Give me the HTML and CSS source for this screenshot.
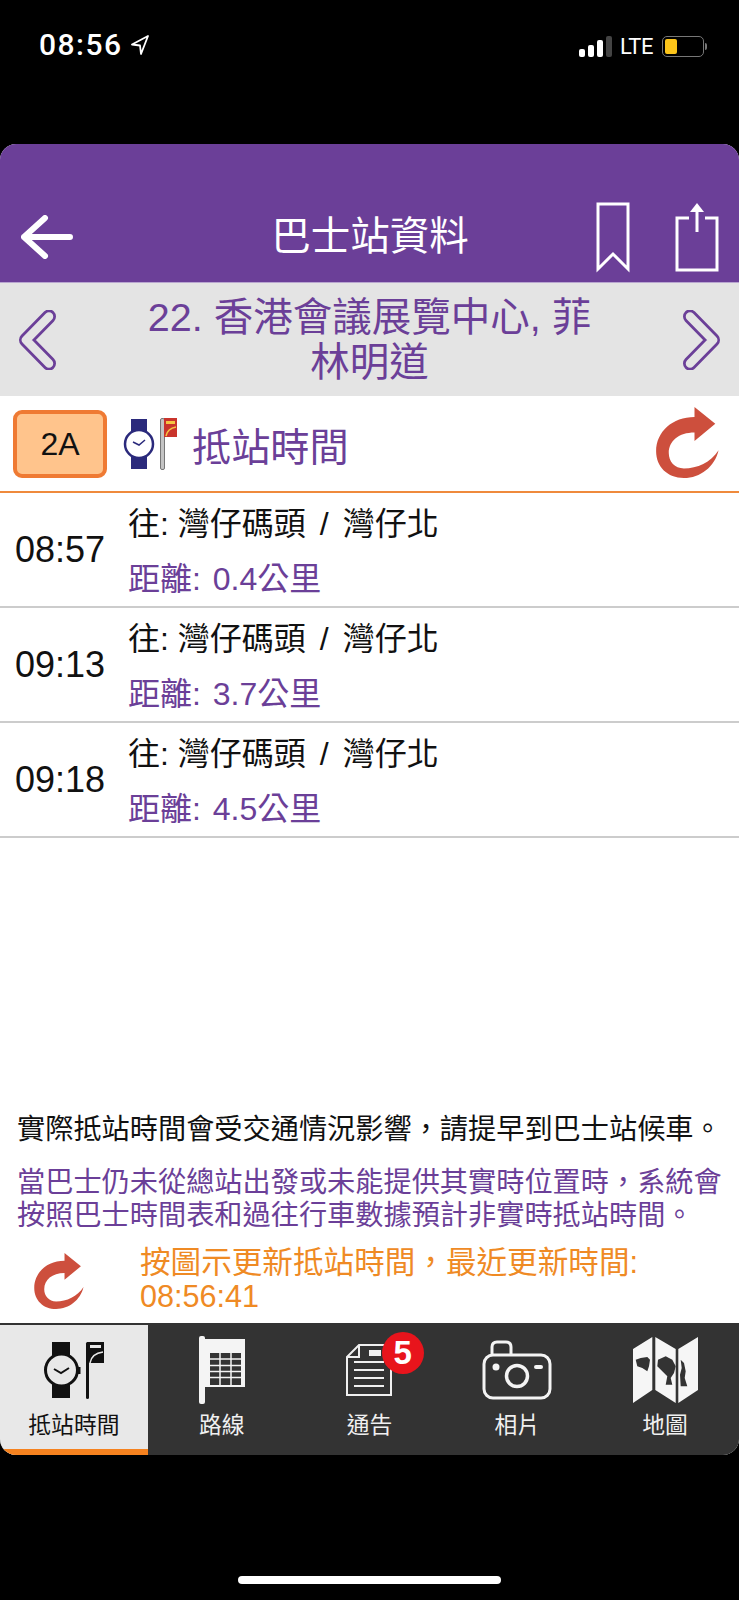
FILE: index.html
```html
<!DOCTYPE html>
<html lang="zh-Hant">
<head>
    <meta charset="UTF-8">
    <meta name="viewport" content="width=device-width, initial-scale=1.0">
    <title>巴士站資料</title>
    <link rel="stylesheet" href="styles.css">
</head>
<body>
    <svg class="defs" width="0" height="0" aria-hidden="true">
        <symbol id="refresh" viewBox="0 0 61 69">
            <path d="M37.300 0 L57.500 16.300 L37.300 33 V24.700 C22 24.700 12.300 33 12.300 44.700 C12.300 53 18 59.700 27 59.700 C40 59.700 53 54 60.700 42 C57 58 43 69 27 69 C11 69 0 58 0 43 C0 24 16 9.700 37.300 9.700 Z"/>
        </symbol>
    </svg>

    <div class="status-bar">
        <div class="status-time">
            <span>08:56</span>
            <svg width="18" height="20" viewBox="0 0 18 20"><path d="M17 1 L1 9.500 L9 10.500 L10 19 Z" fill="none" stroke="#fff" stroke-width="1.800" stroke-linejoin="round"/></svg>
        </div>
        <div class="status-right">
            <div class="signal"><i class="bar1"></i><i class="bar2"></i><i class="bar3"></i><i class="bar4"></i></div>
            <span class="lte">LTE</span>
            <div class="battery"><div class="battery-level"></div></div>
            <div class="battery-cap"></div>
        </div>
    </div>

    <div class="app">
        <div class="app-header">
            <svg class="back-icon" width="52" height="44" viewBox="0 0 52 44"><path d="M24 3 L3 22 L24 41 M3 22 H49" fill="none" stroke="#fff" stroke-width="6" stroke-linecap="round" stroke-linejoin="round"/></svg>
            <h1>巴士站資料</h1>
            <div class="header-actions">
                <svg width="34" height="72" viewBox="0 0 34 72"><path d="M2 2 H32 V67 L17 52 L2 67 Z" fill="none" stroke="#fff" stroke-width="3"/></svg>
                <svg width="44" height="70" viewBox="0 0 44 70"><path d="M14 16 H2 V68 H42 V16 H30" fill="none" stroke="#fff" stroke-width="3"/><path d="M22 30 V6" stroke="#fff" stroke-width="3"/><path d="M15 10 L22 1 L29 10 Z" fill="#fff"/></svg>
            </div>
        </div>

        <div class="stop-bar">
            <svg class="chevron" width="38" height="60" viewBox="0 0 38 60"><path class="chevron-out" d="M31 6.500 L8 30 L31 53.500"/><path class="chevron-in" d="M31 6.500 L8 30 L31 53.500"/></svg>
            <div class="stop-name">22. 香港會議展覽中心, 菲<br>林明道</div>
            <svg class="chevron" width="38" height="60" viewBox="0 0 38 60"><path class="chevron-out" d="M7 6.500 L30 30 L7 53.500"/><path class="chevron-in" d="M7 6.500 L30 30 L7 53.500"/></svg>
        </div>

        <div class="route-row">
            <div class="route-btn">2A</div>
            <svg class="eta-icon" width="56" height="52" viewBox="0 0 56 52">
                <rect x="8" y="1" width="16" height="12" fill="#2b2a7c"/>
                <rect x="8" y="39" width="16" height="12" fill="#2b2a7c"/>
                <circle cx="16" cy="26" r="14" fill="#fff" stroke="#2b2a7c" stroke-width="2.500"/>
                <path d="M10 24 L16 27 L22 22" fill="none" stroke="#2b2a7c" stroke-width="1.500"/>
                <rect x="37.500" y="0.500" width="4" height="51" rx="1.500" fill="#c4c4c4" stroke="#777" stroke-width="1"/>
                <rect x="41" y="0" width="13" height="19" fill="#c9342c"/>
                <rect x="43" y="3" width="9" height="3" fill="#f5c542"/>
                <path d="M43 18 C44 13 47 10 53 9" fill="none" stroke="#f5c542" stroke-width="1.500"/>
            </svg>
            <div class="route-title">抵站時間</div>
            <svg class="refresh-icon" width="63" height="71"><use href="#refresh"/></svg>
        </div>

        <div class="eta-list">
            <div class="eta-item">
                <div class="eta-time">08:57</div>
                <div class="eta-info">
                    <div class="eta-dest">往: 灣仔碼頭<span class="sep">/</span>灣仔北</div>
                    <div class="eta-dist">距離: 0.4公里</div>
                </div>
            </div>
            <div class="eta-item">
                <div class="eta-time">09:13</div>
                <div class="eta-info">
                    <div class="eta-dest">往: 灣仔碼頭<span class="sep">/</span>灣仔北</div>
                    <div class="eta-dist">距離: 3.7公里</div>
                </div>
            </div>
            <div class="eta-item">
                <div class="eta-time">09:18</div>
                <div class="eta-info">
                    <div class="eta-dest">往: 灣仔碼頭<span class="sep">/</span>灣仔北</div>
                    <div class="eta-dist">距離: 4.5公里</div>
                </div>
            </div>
        </div>

        <div class="notes">
            <p class="note-black">實際抵站時間會受交通情況影響，請提早到巴士站候車。</p>
            <p class="note-purple">當巴士仍未從總站出發或未能提供其實時位置時，系統會按照巴士時間表和過往行車數據預計非實時抵站時間。</p>
            <div class="update-row">
                <svg class="refresh-icon small" width="50" height="56"><use href="#refresh"/></svg>
                <div class="update-text">按圖示更新抵站時間，最近更新時間:<br>08:56:41</div>
            </div>
        </div>

        <div class="tab-bar">
            <div class="tab active">
                <div class="tab-icon">
                    <svg width="62" height="58" viewBox="0 0 62 58">
                        <rect x="9" y="1" width="18" height="15" fill="#111"/>
                        <rect x="9" y="42" width="18" height="15" fill="#111"/>
                        <circle cx="18.500" cy="29" r="16" fill="#e8e8e8" stroke="#111" stroke-width="3"/>
                        <rect x="35" y="26" width="2.500" height="7" fill="#111"/>
                        <path d="M11 28 L18 32 L26 27" fill="none" stroke="#111" stroke-width="2"/>
                        <rect x="43" y="1" width="3" height="57" rx="1.500" fill="#111"/>
                        <path d="M44 1 H61 V22 H44 Z" fill="#111"/>
                        <rect x="47" y="4" width="11" height="3" fill="#e8e8e8"/>
                        <path d="M47 22 C48 16 52 12 60 11" fill="none" stroke="#e8e8e8" stroke-width="1.500"/>
                    </svg>
                </div>
                <span>抵站時間</span>
            </div>
            <div class="tab">
                <div class="tab-icon">
                    <svg width="46" height="68" viewBox="0 0 46 68">
                        <rect x="0" y="0" width="6" height="68" rx="2" fill="#f4f4f4"/>
                        <rect x="6" y="3" width="40" height="48" fill="#f4f4f4"/>
                        <path d="M11 17 H42 V49 H11 Z" fill="#333"/>
                        <path d="M11 23 H42 M11 29.500 H42 M11 35.500 H42 M11 41.500 H42 M21 17 V49 M32 17 V49" stroke="#f4f4f4" stroke-width="1.500"/>
                    </svg>
                </div>
                <span>路線</span>
            </div>
            <div class="tab">
                <div class="tab-icon">
                    <svg width="46" height="52" viewBox="0 0 46 52">
                        <path d="M1 13 L13 1 H45 V51 H1 Z M13 1 V13 H1" fill="none" stroke="#f0f0f0" stroke-width="2"/>
                        <path d="M8 18 H38 M8 26 H38 M8 34 H38 M8 42 H38" stroke="#f0f0f0" stroke-width="2"/>
                        <rect x="23" y="6" width="12" height="6" fill="#f0f0f0"/>
                    </svg>
                </div>
                <span>通告</span>
                <div class="badge">5</div>
            </div>
            <div class="tab">
                <div class="tab-icon">
                    <svg width="70" height="60" viewBox="0 0 70 60">
                        <rect x="2" y="15" width="66" height="43" rx="9" fill="none" stroke="#f4f4f4" stroke-width="3"/>
                        <path d="M10 14 V7 Q10 2 15 2 H24 Q29 2 29 7 V14" fill="none" stroke="#f4f4f4" stroke-width="3"/>
                        <circle cx="35" cy="36" r="10.500" fill="none" stroke="#f4f4f4" stroke-width="3.500"/>
                        <circle cx="14" cy="27" r="3.500" fill="#f4f4f4"/>
                        <rect x="52" y="25" width="9" height="4" rx="2" fill="#f4f4f4"/>
                    </svg>
                </div>
                <span>相片</span>
            </div>
            <div class="tab">
                <div class="tab-icon">
                    <svg width="65" height="66" viewBox="0 0 65 66">
                        <path d="M0 12 L19.300 0 V53 L0 66 Z M22.300 0 L42.700 12 V66 L22.300 53 Z M45.300 12 L65 0 V53 L45.300 66 Z" fill="#f6f6f6"/>
                        <path d="M2.700 22.700 L7.700 21 L14.300 20 L17 22.700 L16 29.300 L14.300 34.300 L9.300 31 L4.300 29.300 Z M25 22.700 L32.700 19.300 L39.300 22.700 L42.700 29.300 L41 36 L37.700 41 L39.300 47.700 L32.700 47.700 L34.300 39.300 L29.300 34.300 L24.300 29.300 Z M47.700 22.700 L51 26 L52.700 34.300 L51.700 41 L54.300 49.300 L47.700 49.300 L47 37.700 L48.700 31 Z" fill="#333"/>
                    </svg>
                </div>
                <span>地圖</span>
            </div>
        </div>
    </div>

    <div class="home-area">
        <div class="home-indicator"></div>
    </div>
</body>
</html>
```

FILE: styles.css
```css
body {
    margin: 0;
    height: 1600px;
    display: flex;
    flex-direction: column;
    background: #000;
    font-family: "Liberation Sans", "Noto Sans CJK TC", sans-serif;
    color: #111;
    overflow: hidden;
}

.defs {
    position: absolute;
}

/* status bar */
.status-bar {
    height: 144px;
    padding: 28px 32px 0 39px;
    box-sizing: border-box;
    display: flex;
    justify-content: space-between;
    align-items: flex-start;
    color: #fff;
}

.status-time {
    display: flex;
    align-items: center;
    gap: 8px;
    font-family: Roboto, sans-serif;
    font-weight: 500;
    font-size: 30px;
    line-height: 34px;
    letter-spacing: 1.5px;
}

.status-right {
    display: flex;
    align-items: center;
    height: 34px;
    margin-top: 1px;
}

.signal {
    display: flex;
    align-items: flex-end;
    gap: 3px;
    height: 21px;
    margin-right: 8px;
}

.signal i {
    display: block;
    width: 6px;
    border-radius: 2px;
    background: #fff;
}

.signal .bar1 { height: 8px; }
.signal .bar2 { height: 12px; }
.signal .bar3 { height: 17px; }
.signal .bar4 { height: 21px; background: #444; }

.lte {
    font-family: Roboto, sans-serif;
    font-size: 22px;
    letter-spacing: -0.5px;
    margin-right: 9px;
}

.battery {
    width: 42px;
    height: 21px;
    box-sizing: border-box;
    border: 1.5px solid #777;
    border-radius: 5px;
    padding: 2px;
}

.battery-level {
    width: 12px;
    height: 100%;
    background: #fcc419;
    border-radius: 2px;
}

.battery-cap {
    width: 2px;
    height: 7px;
    margin-left: 1px;
    background: #777;
    border-radius: 0 2px 2px 0;
}

/* app card */
.app {
    height: 1311px;
    display: flex;
    flex-direction: column;
    background: #fff;
    border-radius: 16px;
    overflow: hidden;
}

.app-header {
    height: 139px;
    box-sizing: border-box;
    padding: 58px 20px 0 21px;
    border-bottom: 1px solid #b9a6d0;
    display: grid;
    grid-template-columns: 1fr auto 1fr;
    align-items: flex-start;
    background: #6b3f98;
}

.back-icon {
    margin-top: 13px;
}

.app-header h1 {
    margin: 11px 0 0;
    font-size: 39.5px;
    line-height: 46px;
    font-weight: 400;
    color: #fff;
}

.header-actions {
    display: flex;
    justify-content: flex-end;
    gap: 45px;
}

.stop-bar {
    height: 113px;
    padding: 0 18px;
    display: flex;
    align-items: center;
    justify-content: space-between;
    background: #e4e4e4;
}

.chevron path {
    fill: none;
    stroke-linecap: round;
    stroke-linejoin: round;
}

.chevron-out {
    stroke: #6b3f98;
    stroke-width: 14;
}

.chevron-in {
    stroke: #e4e4e4;
    stroke-width: 8.5;
}

.stop-name {
    font-size: 39.5px;
    line-height: 45px;
    text-align: center;
    color: #6b3f98;
}

.route-row {
    height: 95px;
    padding: 0 20px 0 13px;
    display: flex;
    align-items: center;
    border-bottom: 2px solid #ef8a3c;
}

.route-btn {
    width: 94px;
    height: 68px;
    box-sizing: border-box;
    border: 4px solid #ef7a33;
    border-radius: 9px;
    background: #ffc48c;
    font-size: 32px;
    line-height: 60px;
    text-align: center;
}

.eta-icon {
    margin-left: 16px;
}

.route-title {
    flex: 1;
    margin-left: 13px;
    font-size: 39.2px;
    color: #6b3f98;
}

.refresh-icon {
    fill: #cd4f3d;
    margin-bottom: 3px;
}

.eta-item {
    height: 113px;
    padding: 0 15px;
    border-bottom: 2px solid #ccc;
    display: flex;
    align-items: center;
}

.eta-time {
    width: 113px;
    font-size: 36px;
}

.eta-info {
    padding-top: 4px;
}

.eta-dest {
    font-size: 32px;
    line-height: 55px;
}

.eta-dest .sep {
    margin: 0 14px;
}

.eta-dist {
    font-size: 32px;
    line-height: 55px;
    word-spacing: 3px;
    color: #6b3f98;
}

.notes {
    flex: 1;
    display: flex;
    flex-direction: column;
    justify-content: flex-end;
    padding: 0 8px 10px 17px;
}

.notes p {
    margin: 0;
    font-size: 28.2px;
}

.note-black {
    line-height: 36px;
    margin-bottom: 19px !important;
}

.note-purple {
    line-height: 33px;
    color: #6b3f98;
}

.update-row {
    display: flex;
    align-items: center;
    margin-top: 13px;
}

.refresh-icon.small {
    margin: 3px 0 0 17px;
    flex: none;
}

.update-text {
    margin-left: 56px;
    font-size: 30.6px;
    line-height: 34px;
    color: #ef8a24;
}

/* bottom tabs */
.tab-bar {
    height: 132px;
    flex: none;
    display: grid;
    grid-template-columns: repeat(5, 1fr);
    background: #333;
}

.tab {
    position: relative;
    padding-top: 12px;
    box-sizing: border-box;
    display: flex;
    flex-direction: column;
    align-items: center;
    font-size: 22.8px;
    line-height: 30px;
    color: #f0f0f0;
}

.tab span {
    margin-top: 5px;
}

.tab.active {
    margin-top: 2px;
    padding-top: 10px;
    background: #e8e8e8;
    border-bottom: 6px solid #f5821f;
    color: #111;
}

.tab-icon {
    height: 70px;
    display: flex;
    align-items: center;
    justify-content: center;
}

.badge {
    position: absolute;
    top: 9px;
    left: 86px;
    width: 42px;
    height: 42px;
    border-radius: 50%;
    background: #e8141c;
    color: #fff;
    font-size: 33px;
    line-height: 42px;
    font-weight: 700;
    text-align: center;
}

.home-area {
    flex: 1;
    display: flex;
    justify-content: center;
    align-items: flex-end;
    padding-bottom: 16px;
}

.home-indicator {
    width: 263px;
    height: 8px;
    border-radius: 4px;
    background: #fff;
}
```
